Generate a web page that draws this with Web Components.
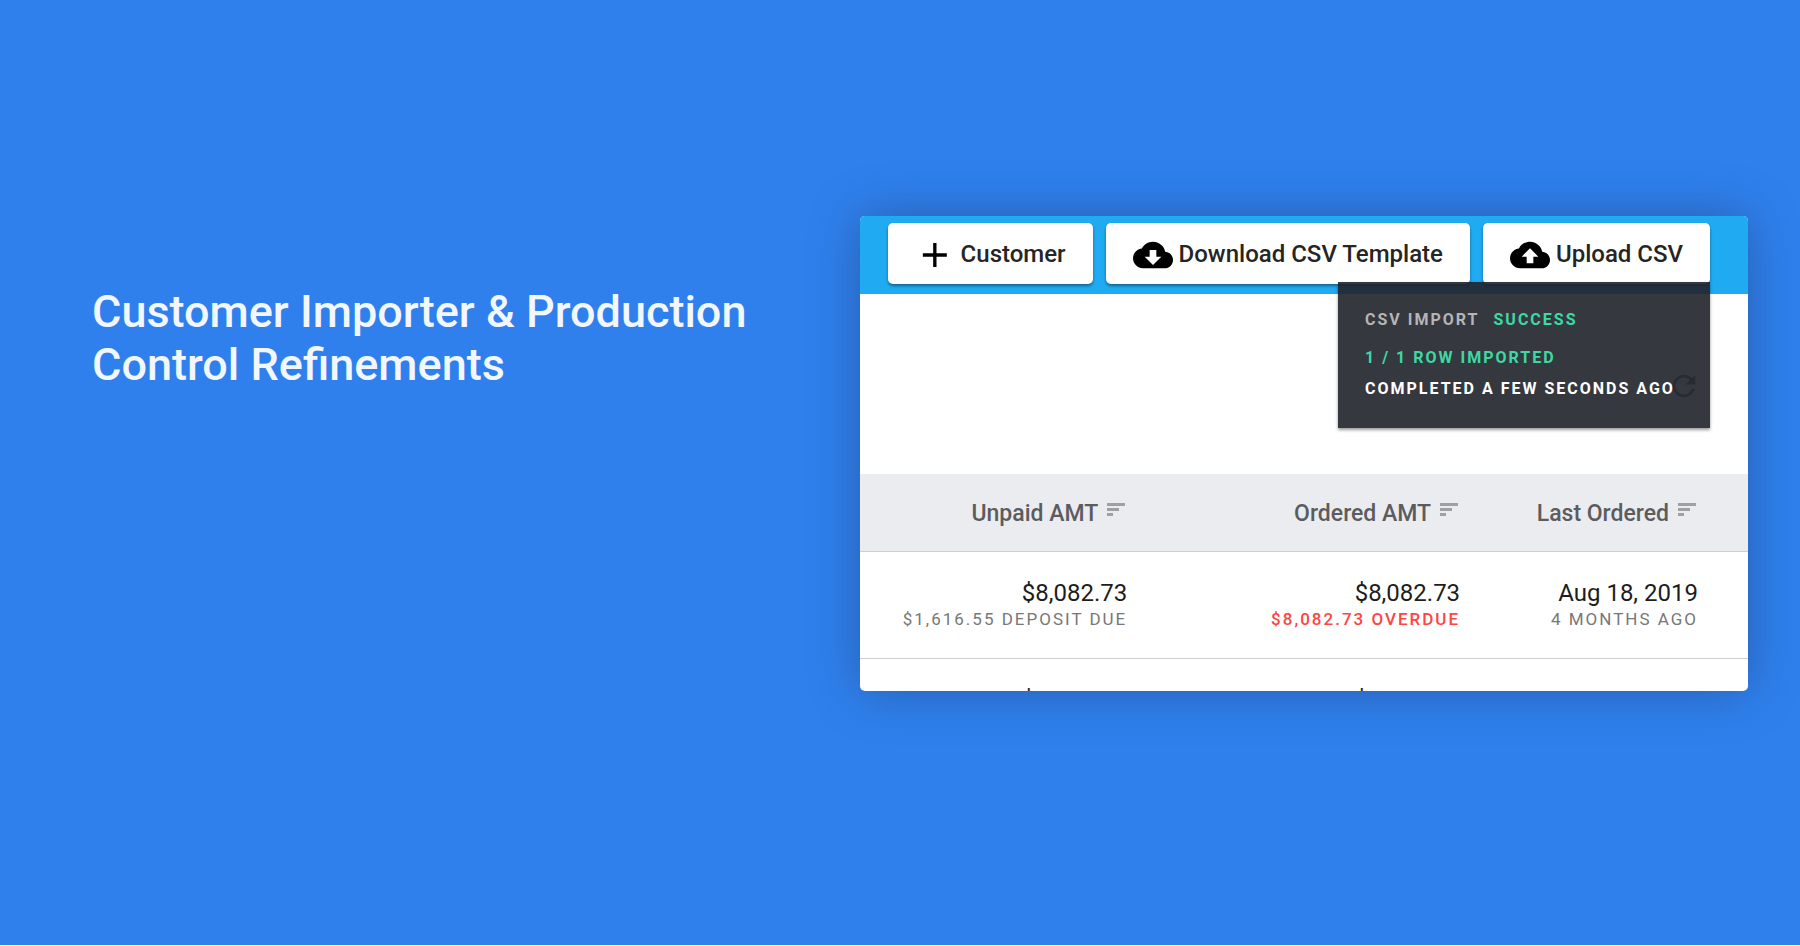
<!DOCTYPE html>
<html lang="en">
<head>
<meta charset="utf-8">
<title>Customer Importer &amp; Production Control Refinements</title>
<style>
html { background: #fff; }
body { margin: 0; font-family: Roboto, sans-serif; }
</style>
</head>
<body>
<feature-hero>
  <h1 slot="title">Customer Importer &amp; Production Control Refinements</h1>
  <customer-panel></customer-panel>
</feature-hero>
<script>
const define = (name, html, setup) => customElements.define(name, class extends HTMLElement {
  constructor() {
    super();
    this.attachShadow({ mode: "open" }).innerHTML = html;
    if (setup) setup(this, this.shadowRoot);
  }
});

define("feature-hero", `
<style>
:host { display: grid; grid-template-columns: minmax(0, 1fr) 53.6%; align-items: start; box-sizing: border-box;
  min-height: calc(100vh - 1px); padding: 216px 52px 160px 92px; background: #2f80ed; color: #f2f6fd; }
::slotted(h1) { margin: 0; padding: 69px 0 0; font-size: 45px; line-height: 53px; font-weight: 500; }
</style>
<slot name="title"></slot>
<slot></slot>`);

define("action-button", `
<style>
:host { display: block; }
button { display: flex; align-items: center; box-sizing: border-box; width: 100%; height: 61px; margin: 0; border: 0;
  border-radius: 5px; padding: 0 27px; background: #fff; color: #252525; font: 500 24px/28px Roboto, sans-serif;
  white-space: nowrap; box-shadow: 0 2px 3px rgba(0, 0, 0, .4); cursor: pointer; }
svg { display: block; flex: none; width: 40px; height: 40px; margin-top: 2px; margin-right: 6px; fill: #000; }
</style>
<button type="button"><svg viewBox="0 0 24 24" aria-hidden="true"><path/></svg><slot></slot></button>`,
(host, root) => {
  const cloud = "M19.35 10.04C18.67 6.59 15.64 4 12 4 9.11 4 6.6 5.64 5.35 8.04 2.34 8.36 0 10.91 0 14c0 3.31 2.69 6 6 6h13c2.76 0 5-2.24 5-5 0-2.64-2.05-4.78-4.65-4.96z";
  const icons = {
    add: "M19.1 13h-6.2v6.2h-2V13H4.7v-2h6.2V4.8h2V11h6.2z",
    download: cloud + "M17 13l-5 5-5-5h3V9h4v4h3z",
    upload: cloud + "M14 13v4h-4v-4H7l5-5 5 5h-3z"
  };
  const p = root.querySelector("path");
  p.setAttribute("d", icons[host.getAttribute("icon")]);
  p.setAttribute("fill-rule", "evenodd");
});

define("import-status", `
<style>
:host { display: block; box-sizing: border-box; padding: 26px 26px 24px 27px; background: rgba(32, 34, 43, .9); color: #fff;
  font-size: 16px; line-height: 24px; font-weight: 700; letter-spacing: 2px; white-space: nowrap;
  box-shadow: 0 2px 3px rgba(0, 0, 0, .4); }
p { margin: 0; line-height: 31px; }
.head { display: flex; gap: 14px; line-height: 24px; margin-bottom: 10px; color: #b5b5b8; }
.ok { color: #3dd9a4; }
</style>
<p class="head"><span>CSV IMPORT</span><span class="ok">SUCCESS</span></p>
<p class="ok">1 / 1 ROW IMPORTED</p>
<p>COMPLETED A FEW SECONDS AGO</p>`);

define("sort-label", `
<style>
:host { display: inline-block; }
button { display: flex; align-items: flex-start; gap: 9px; margin: 0; padding: 2px 0 0; border: 0; background: none; color: #5c5c5f;
  font: 500 23px/28px Roboto, sans-serif; white-space: nowrap; }
svg { display: block; width: 18px; height: 14px; margin-top: 3px; margin-right: 2px; fill: #a0a0a3; }
</style>
<button type="button"><slot></slot><svg viewBox="0 0 18 14" aria-hidden="true"><path d="M0 0h18v3H0zM0 5h12v3H0zM0 10h6v3H0z"/></svg></button>`);

define("orders-table", `
<style>
:host { display: block; }
table { width: 100%; border-collapse: collapse; table-layout: fixed; color: #1d1d1d; }
col:nth-child(1) { width: 35.7%; } col:nth-child(2) { width: 37.5%; }
th, td { padding: 0 50px 0 0; text-align: right; white-space: nowrap; border-bottom: 1px solid #cfcfd2; }
th { height: 77px; background: #ebecf0; }
sort-label { vertical-align: middle; }
td { height: 79px; padding-top: 27px; vertical-align: top; font-size: 24px; line-height: 28px; }
small { display: block; font-size: 17px; line-height: 24px; letter-spacing: 2px; color: #777; }
.late { color: #f44; font-weight: 500; }
</style>
<table>
<colgroup><col><col><col></colgroup>
<thead><tr><th scope="col"><sort-label>Unpaid AMT</sort-label></th><th scope="col"><sort-label>Ordered AMT</sort-label></th><th scope="col"><sort-label>Last Ordered</sort-label></th></tr></thead>
<tbody>
<tr><td>$8,082.73<small>$1,616.55 DEPOSIT DUE</small></td><td>$8,082.73<small class="late">$8,082.73 OVERDUE</small></td><td>Aug 18, 2019<small>4 MONTHS AGO</small></td></tr>
<tr><td>$4,772.52</td><td>$1,994.52</td><td>Sep 20, 2019</td></tr>
</tbody>
</table>`);

define("customer-panel", `
<style>
:host { display: block; position: relative; aspect-ratio: 888 / 475; border-radius: 5px; background: #fff; color: #1d1d1d;
  box-shadow: 0 0 50px rgba(30, 40, 70, .38); }
.clip { height: 100%; overflow: hidden; border-radius: 5px; }
.bar { position: relative; display: flex; justify-content: flex-end; gap: 13px; box-sizing: border-box; height: 78px; padding: 7px 38px 0 0; background: #1faaf1; }
import-status { position: absolute; z-index: 1; top: 66px; right: 38px; width: 372px; }
.tools { display: flex; justify-content: flex-end; height: 180px; padding-right: 47px; }
.tools button { margin: 75px 0 0; padding: 0; border: 0; background: none; height: 34px; }
.tools svg { display: block; width: 34px; height: 34px; fill: #777; }
</style>
<div class="clip">
  <div class="bar">
    <action-button icon="add">Customer</action-button>
    <action-button icon="download">Download CSV Template</action-button>
    <action-button icon="upload">Upload CSV</action-button>
    <import-status role="status"></import-status>
  </div>
  <div class="tools"><button type="button" aria-label="Refresh"><svg viewBox="0 0 24 24" aria-hidden="true"><path d="M17.65 6.35C16.2 4.9 14.21 4 12 4c-4.42 0-7.99 3.58-7.99 8s3.57 8 7.99 8c3.73 0 6.84-2.55 7.73-6h-2.08c-.82 2.33-3.04 4-5.65 4-3.31 0-6-2.69-6-6s2.69-6 6-6c1.66 0 3.14.69 4.22 1.78L13 11h7V4l-2.35 2.35z"/></svg></button></div>
  <orders-table></orders-table>
</div>`);
</script>
</body>
</html>
